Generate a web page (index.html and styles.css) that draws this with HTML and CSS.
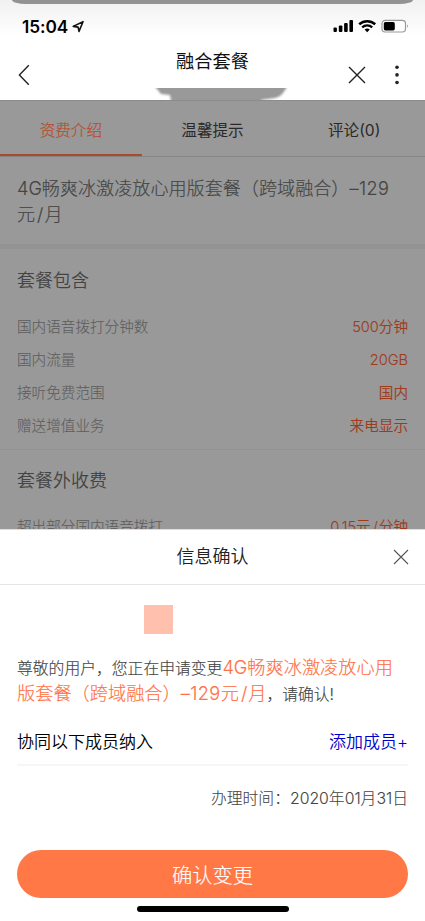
FILE: index.html
```html
<!DOCTYPE html>
<html lang="zh-CN">
<head>
<meta charset="utf-8">
<title>融合套餐</title>
<link rel="stylesheet" href="styles.css">
</head>
<body>
<div class="phone">
  <header class="top">
    <div class="card-edge"></div>
    <div class="status">
      <span class="time">15:04</span>
      <svg class="location" width="13" height="13" viewBox="0 0 13 13"><path d="M1.2 6.4 11 1.7 7 11.4 6.1 7.1Z" fill="none" stroke="#111" stroke-width="1.6" stroke-linejoin="round"/></svg>
      <svg class="signals" width="76" height="14" viewBox="0 0 76 14">
        <g><rect x="0.5" y="8.5" width="3.4" height="4.5" rx="1"/><rect x="5.8" y="6.6" width="3.6" height="6.4" rx="1"/><rect x="11.1" y="3.9" width="3.6" height="9.1" rx="1"/><rect x="16.4" y="1" width="3.6" height="12" rx="1"/></g>
        <path d="M26.2 5.2a12 12 0 0 1 16 0" fill="none" stroke="#000" stroke-width="2.5"/>
        <path d="M29.2 8.4a7.4 7.4 0 0 1 10 0" fill="none" stroke="#000" stroke-width="2.3"/>
        <path d="M31.6 10.6a4 4 0 0 1 5.2 0L34.2 13.2Z"/>
        <rect x="49" y="1.4" width="23.5" height="11.6" rx="3.2" fill="#fff" stroke="#999" stroke-width="1.2"/>
        <rect x="50.8" y="3.1" width="11" height="8.3" rx="1.6"/><path d="M74 5.2q1.7 1.8 0 3.8Z" fill="#888"/>
      </svg>
    </div>
    <div class="nav">
      <svg class="back" width="14" height="22" viewBox="0 0 14 22"><path d="M10.8 1.3 1.4 11l9.4 9.7"/></svg>
      <h1>融合套餐</h1>
      <svg class="close" width="18" height="18" viewBox="0 0 18 18"><path d="m1 1 16 16M17 1 1 17"/></svg>
      <svg class="more" width="4" height="20" viewBox="0 0 4 20"><circle cx="2" cy="2.2" r="1.8"/><circle cx="2" cy="9.9" r="1.8"/><circle cx="2" cy="17.5" r="1.8"/></svg>
    </div>
    <svg class="smudge" width="140" height="12" viewBox="0 0 140 12">
      <defs><filter id="soft" x="-10%" y="-30%" width="120%" height="160%"><feGaussianBlur stdDeviation="1.3"/></filter></defs>
      <path d="M0-4H136L130 5Q127 9 122 10L108 12V20H19L17 7 8 6Z" fill="#999" filter="url(#soft)"/>
    </svg>
  </header>

  <main class="page">
    <nav class="tabs"><span class="tab active">资费介绍</span><span class="tab">温馨提示</span><span class="tab">评论(0)</span></nav>
    <h2 class="plan">4G畅爽冰激凌放心用版套餐（跨域融合）<span class="price">–129</span><br>元<span class="slash">/</span>月</h2>
    <section class="fees">
      <h3>套餐包含</h3>
      <div class="row"><span>国内语音拨打分钟数</span><b>500分钟</b></div>
      <div class="row"><span>国内流量</span><b>20GB</b></div>
      <div class="row"><span>接听免费范围</span><b>国内</b></div>
      <div class="row"><span>赠送增值业务</span><b>来电显示</b></div>
    </section>
    <section class="fees extra">
      <h3>套餐外收费</h3>
      <div class="row"><span>超出部分国内语音拨打</span><b>0.15元<span class="slash">/</span>分钟</b></div>
    </section>
  </main>

  <section class="sheet">
    <header class="sheet-head">
      <h2>信息确认</h2>
      <svg width="16" height="16" viewBox="0 0 16 16"><path d="m1 1 14 14M15 1 1 15"/></svg>
    </header>
    <div class="sheet-body">
      <div class="swatch"></div>
      <p class="message">尊敬的用户，您正在申请变更<em>4G畅爽冰激凌放心用<br>版套餐（跨域融合）<span class="price">–129</span>元<span class="slash">/</span>月</em>，请确认!</p>
      <div class="members"><span>协同以下成员纳入</span><a>添加成员+</a></div>
      <p class="date">办理时间：2020年01月31日</p>
      <button class="confirm">确认变更</button>
    </div>
    <div class="home"></div>
  </section>
</div>
</body>
</html>
```
FILE: styles.css
```css
* { box-sizing: border-box; }
body { margin: 0; background: #fff; font-family: Inter, "Noto Sans CJK SC", sans-serif; font-weight: 300; }
h1, h2, h3, p { margin: 0; font-weight: inherit; }
.phone { display: flex; flex-direction: column; width: 425px; height: 921px; overflow: hidden; }

.top { position: relative; flex: none; height: 100px; background: linear-gradient(#f1f1f1, #fff 36px); }
.card-edge { height: 4px; margin: 0 12px; background: #929292; border-radius: 0 0 14px 14px / 0 0 4px 4px; }
.status { display: flex; align-items: center; height: 44px; padding: 0 16px 0 22px; }
.time { width: 47px; font-size: 17.3px; font-weight: 600; letter-spacing: -0.1px; white-space: nowrap; }
.location { margin-left: 3px; }
.signals { margin-left: auto; }
.nav { display: flex; align-items: center; height: 54px; padding: 0 26px 0 18px; }
.nav h1 { flex: 1; margin: -28px 0 0 103px; text-align: center; font-size: 18.2px; font-weight: 400; line-height: 26px; color: #111; white-space: nowrap; }
.nav svg { flex: none; fill: none; stroke: #222; stroke-width: 1.4; }
.nav .close { margin: 0 29px 0 58px; }
.nav .more { fill: #222; stroke: none; }
.smudge { position: absolute; left: 153px; top: 88px; }

.page { flex: none; height: 429px; overflow: hidden; background: #999; color: #444; border-top: 1px solid #8b8b8b; }
.tabs { display: flex; height: 56px; border-bottom: 1px solid #858585; }
.tab { flex: 1; height: 55px; line-height: 59px; text-align: center; font-size: 15.6px; font-weight: 400; color: #292929; }
.active { color: #b64e2c; font-weight: 300; -webkit-text-stroke: 0.2px; border-bottom: 2px solid #a94a2a; }
.plan { height: 92px; padding: 18px 16px 0 17px; border-bottom: 5px solid #939393; font-size: 18.1px; line-height: 26px; white-space: nowrap; -webkit-text-stroke: 0.15px; }
.price { letter-spacing: 0.4px; }
.slash { margin: 0 1px 0 2px; }
.fees { height: 200px; padding: 19px 17px 0; }
.fees h3 { height: 42px; font-size: 18px; line-height: 26px; font-weight: 350; }
.extra { padding-top: 18px; border-top: 1px solid #929292; }
.row { display: flex; justify-content: space-between; height: 33px; line-height: 34px; font-size: 14.6px; color: #5e5e5e; -webkit-text-stroke: 0.1px; }
.row b { font-weight: 350; color: #9e3b1b; }

.sheet { flex: 1; background: #fff; border-top: 1px solid #ddd; }
.sheet-head { position: relative; display: flex; align-items: center; justify-content: center; height: 55px; padding-bottom: 1px; border-bottom: 1px solid #e5e5e5; }
.sheet-head h2 { font-size: 18px; line-height: 26px; color: #222; font-weight: 350; }
.sheet-head svg { position: absolute; right: 16px; top: 19px; fill: none; stroke: #555; stroke-width: 1.1; }
.sheet-body { padding: 20px 17px 0; }
.swatch { width: 29px; height: 29px; margin-left: 127px; background: #ffc1ad; }
.message { height: 84px; padding-top: 22px; line-height: 26px; font-size: 15.8px; color: #444; white-space: nowrap; -webkit-text-stroke: 0.15px; }
.message em { font-style: normal; font-size: 18.2px; line-height: 20px; color: #ff7044; }
.members { display: flex; justify-content: space-between; height: 48px; border-bottom: 2px solid #f6f6f6; font-size: 17px; line-height: 49px; color: #000; font-weight: 350; }
.members a { color: #00c; }
.date { height: 84px; line-height: 65px; text-align: right; font-size: 15.8px; color: #444; -webkit-text-stroke: 0.1px; }
.confirm { display: block; width: 391px; height: 48px; padding: 0 0 1px; border: 0; border-radius: 24px; background: #ff7846; color: #fff; font: inherit; font-size: 20.3px; -webkit-text-stroke: 0.15px; }
.home { width: 152px; height: 6px; margin: 8px 0 0 137px; border-radius: 3px; background: #000; }
```
